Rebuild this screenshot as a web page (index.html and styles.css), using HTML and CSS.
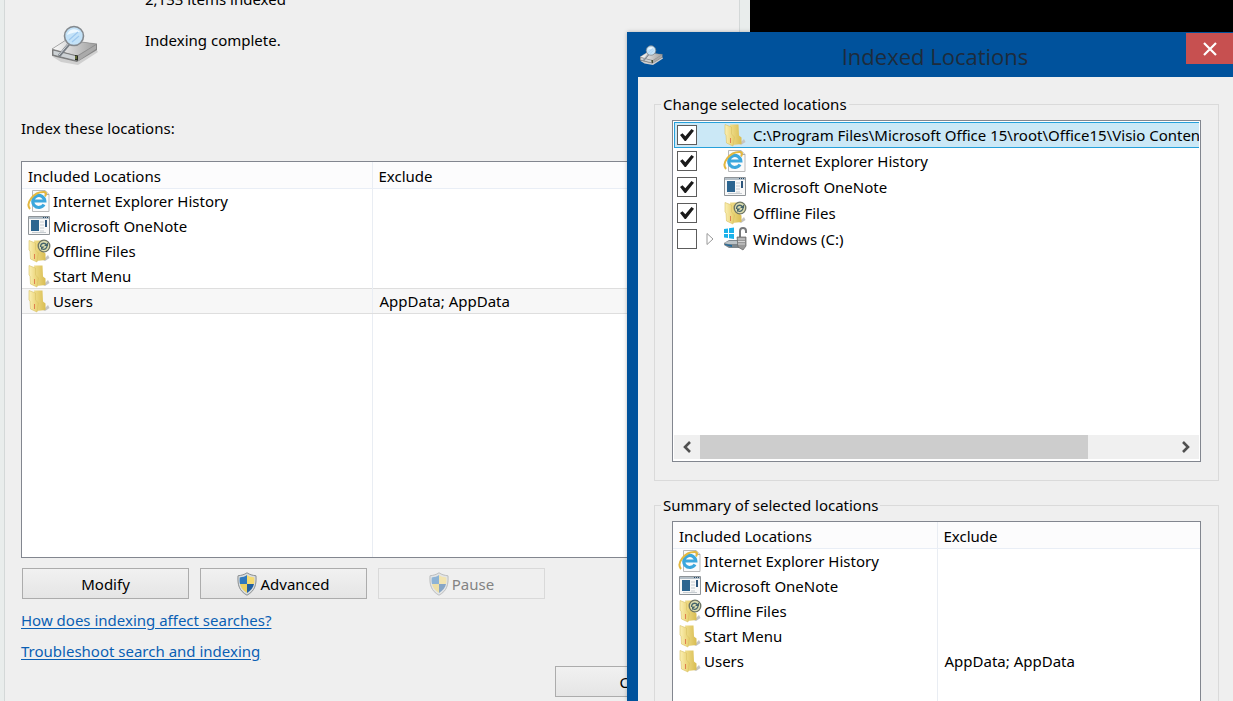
FILE: index.html
```html
<!DOCTYPE html>
<html lang="en">
<head>
<meta charset="utf-8">
<title>Indexing Options</title>
<link rel="stylesheet" href="styles.css">
</head>
<body>
<svg class="defs" aria-hidden="true">
  <defs>
    <linearGradient id="gold" x1="0" x2="1"><stop offset="0" stop-color="#f0de8c"/><stop offset="1" stop-color="#d9bd52"/></linearGradient>
    <linearGradient id="gold2" x1="0" x2="1"><stop offset="0" stop-color="#fbf0b4"/><stop offset="1" stop-color="#e6cc68"/></linearGradient>
    <linearGradient id="steel" x1="0" x2="1"><stop offset="0" stop-color="#fdfdfd"/><stop offset="1" stop-color="#9c9c9c"/></linearGradient>
    <symbol id="i-folder" viewBox="0 0 24 24">
      <path d="M16 21l5-5 1.500 3-4.500 3z" fill="#c4c4c4"/>
      <path d="M7 1.500h8.500l.5 11 2.500 2v6.500l-9 1z" fill="url(#gold)"/>
      <path d="M2 1.500l6.500 2.500v7l3 3-1.500 9-6.500-3-.5-8-1-1z" fill="url(#gold2)" stroke="#d8c163" stroke-width=".6"/>
      <path d="M7.500 15v5" stroke="#e08050" stroke-width="1"/>
    </symbol>
    <symbol id="i-ie" viewBox="0 0 24 24">
      <path d="M5.500 1.500H18l4 4V22.500H5.500z" fill="#fbfbfb" stroke="#b9b9b9"/>
      <path d="M18 1.500V5.500h4" fill="#ddd" stroke="#aaa"/>
      <path d="M17 15.500a6 6 0 1 1 .8-3.500H7.500" fill="none" stroke="#3ba7dd" stroke-width="3.200"/>
      <path d="M3 20C-2 14 7 2.500 17 3c3 .3 2 3 1 4.500" fill="none" stroke="#e3b840" stroke-width="2"/>
    </symbol>
    <symbol id="i-note" viewBox="0 0 24 24">
      <path d="M1.500 2.500h21v18h-21z" fill="#f8f8f8" stroke="#8f9498"/>
      <path d="M2 3h20v2H2z" fill="#b5c0c8"/>
      <path d="M16 3.500h1m1 0h1m1 0h1" stroke="#234a6a"/>
      <path d="M4 6h8v11H4z" fill="#2c6590"/>
      <path d="M13 8h4m-4 3h4m-4 3h4m-4 3h4M5 18.500h14" stroke="#c6ccd0"/>
      <path d="M18 6h2v7h-2z" fill="#2d567c"/>
    </symbol>
    <symbol id="i-offline" viewBox="0 0 24 24">
      <use href="#i-folder"/>
      <circle cx="17" cy="7" r="5.800" fill="#dcdcae" stroke="#6c7464" stroke-width="1.300"/>
      <path d="M13.500 8c0-4 4-5 6-2M20 6c.5 3-2 5-5 4" fill="none" stroke="#45646b" stroke-width="1.300"/>
      <path d="M17 7h4V3.500zM17.500 7.500H14V11z" fill="#45646b"/>
    </symbol>
    <symbol id="i-drive" viewBox="0 0 24 24">
      <path d="M1 2l4-.5v4.500H1zM6 1.300L11 .5V6H6zM1 7h4v4l-4-.5zM6 7h5v5l-5-.8z" fill="#1bb2ea"/>
      <path d="M1 16l5-3h14l-3 4v4H6l-5-3z" fill="#7e878d"/>
      <path d="M1 16l5-2h12l-3 3H5z" fill="#bcc3c7"/><path d="M2 17l7 1v2l-7-2z" fill="#216a9b"/>
      <path d="M17 10V4c0-4 6-4 6 0v2" fill="none" stroke="#77797b" stroke-width="2"/>
      <path d="M14 10h9v9l-3 4-5-3z" fill="#999" stroke="#666" stroke-width=".7"/>
      <path d="M15 12h7m-7 2.500h7m-7 2.500h7" stroke="#d4d4d4"/>
    </symbol>
    <symbol id="i-search" viewBox="0 0 48 40">
      <path d="M2 32l8 5 17 3 20-13-2-3z" fill="#cfcfcf"/>
      <path d="M1 24L15 15l31 4v6L26 37 1 31z" fill="#858585"/>
      <path d="M1 24L15 15l31 4-20 12z" fill="url(#steel)" stroke="#888" stroke-width=".6"/>
      <path d="M2 25l24 6v5L2 30z" fill="#cdd2d5" stroke="#666" stroke-width=".7"/>
      <path d="M27 31l18-11v4L27 36z" fill="#aaa"/>
      <path d="M24 30l3 .5v5l-3-.5z" fill="#252a20"/><path d="M25 31v3" stroke="#c2d260" stroke-width=".8"/>
      <path d="M18 19L8 31" stroke="#777d84" stroke-width="3"/><path d="M18 18L8 30" stroke="#d2d6da" stroke-width="1"/>
      <circle cx="23" cy="11" r="9.500" fill="#c3e2f8" stroke="#84898e" stroke-width="1.600"/>
      <path d="M16 10c2-7 10-7 13-3-4 0-9 1-13 3z" fill="#edf8ff"/>
      <path d="M18 15l9-8m-6 10l7-6" stroke="#9dc8ee" stroke-width="1.200"/>
    </symbol>
    <symbol id="i-shield" viewBox="0 0 20 24">
      <path d="M10 .8c3 2 5 2.400 9 3 .5 9-1 15-9 19.400C2 18.800.5 12.800 1 3.800c4-.6 6-1 9-3z" fill="#d9dddf" stroke="#8a8e90"/>
      <path d="M10 3v9H3c-.5-2-.5-4-.3-6.500C6 5 8 4.500 10 3z" fill="#2e78bd"/>
      <path d="M10 3c2 1.500 4 2 7.300 2.500.2 2.500.2 4.500-.3 6.500h-7z" fill="#f5db72"/>
      <path d="M3 12h7v9c-4-2.500-6-5-7-9z" fill="#ecd062"/>
      <path d="M10 12h7c-1 4-3 6.500-7 9z" fill="#215f9f"/>
    </symbol>
  </defs>
</svg>

<main class="desktop">
  <section class="window options" aria-label="Indexing Options">
    <div class="panel">
      <div class="status">
        <svg class="status-icon"><use href="#i-search"/></svg>
        <div class="status-text"><p>2,133 items indexed</p><p>Indexing complete.</p></div>
      </div>
      <p class="list-label">Index these locations:</p>
      <div class="list-box main-list">
        <table class="locations">
          <thead><tr><th class="name">Included Locations</th><th>Exclude</th></tr></thead>
          <tbody>
            <tr><td class="name"><span class="item"><svg class="icon"><use href="#i-ie"/></svg>Internet Explorer History</span></td><td></td></tr>
            <tr><td class="name"><span class="item"><svg class="icon"><use href="#i-note"/></svg>Microsoft OneNote</span></td><td></td></tr>
            <tr><td class="name"><span class="item"><svg class="icon"><use href="#i-offline"/></svg>Offline Files</span></td><td></td></tr>
            <tr><td class="name"><span class="item"><svg class="icon"><use href="#i-folder"/></svg>Start Menu</span></td><td></td></tr>
            <tr class="current"><td class="name"><span class="item"><svg class="icon"><use href="#i-folder"/></svg>Users</span></td><td>AppData; AppData</td></tr>
            <tr class="filler"><td class="name"></td><td></td></tr>
          </tbody>
        </table>
      </div>
      <div class="actions">
        <button type="button" class="btn">Modify</button>
        <button type="button" class="btn"><svg class="shield"><use href="#i-shield"/></svg>Advanced</button>
        <button type="button" class="btn" disabled><svg class="shield"><use href="#i-shield"/></svg>Pause</button>
      </div>
      <div class="links">
        <a href="#searches">How does indexing affect searches?</a>
        <a href="#troubleshoot">Troubleshoot search and indexing</a>
      </div>
      <div class="footer"><button type="button" class="btn">Close</button></div>
    </div>
  </section>

  <section class="window indexed" aria-label="Indexed Locations">
    <header class="titlebar">
      <svg class="title-icon"><use href="#i-search"/></svg>
      <h1>Indexed Locations</h1>
      <button type="button" class="close" aria-label="Close"><svg viewBox="0 0 16 16"><path d="M2 2l12 12M14 2L2 14" fill="none" stroke="#fff" stroke-width="2.200"/></svg></button>
    </header>
    <div class="content">
      <fieldset class="group">
        <legend>Change selected locations</legend>
        <div class="list-box tree">
          <ul>
            <li class="selected"><input type="checkbox" id="c1" checked><span class="expander"></span><svg class="icon"><use href="#i-folder"/></svg><label for="c1">C:\Program Files\Microsoft Office 15\root\Office15\Visio Content</label></li>
            <li><input type="checkbox" id="c2" checked><span class="expander"></span><svg class="icon"><use href="#i-ie"/></svg><label for="c2">Internet Explorer History</label></li>
            <li><input type="checkbox" id="c3" checked><span class="expander"></span><svg class="icon"><use href="#i-note"/></svg><label for="c3">Microsoft OneNote</label></li>
            <li><input type="checkbox" id="c4" checked><span class="expander"></span><svg class="icon"><use href="#i-offline"/></svg><label for="c4">Offline Files</label></li>
            <li><input type="checkbox" id="c5"><button type="button" class="expander" aria-label="Expand"><svg viewBox="0 0 8 14"><path d="M1 1.500L7 7l-6 5.500z" fill="#fff" stroke="#999"/></svg></button><svg class="icon"><use href="#i-drive"/></svg><label for="c5">Windows (C:)</label></li>
          </ul>
          <div class="scrollbar">
            <button type="button" aria-label="Scroll left"><svg viewBox="0 0 10 12"><path d="M8 1L3 6l5 5" fill="none" stroke="#505050" stroke-width="2.600"/></svg></button>
            <div class="track"><div class="thumb"></div></div>
            <button type="button" aria-label="Scroll right"><svg viewBox="0 0 10 12"><path d="M2 1l5 5-5 5" fill="none" stroke="#505050" stroke-width="2.600"/></svg></button>
          </div>
        </div>
      </fieldset>
      <fieldset class="group">
        <legend>Summary of selected locations</legend>
        <div class="list-box summary">
          <table class="locations">
            <thead><tr><th class="name">Included Locations</th><th>Exclude</th></tr></thead>
            <tbody>
              <tr><td class="name"><span class="item"><svg class="icon"><use href="#i-ie"/></svg>Internet Explorer History</span></td><td></td></tr>
              <tr><td class="name"><span class="item"><svg class="icon"><use href="#i-note"/></svg>Microsoft OneNote</span></td><td></td></tr>
              <tr><td class="name"><span class="item"><svg class="icon"><use href="#i-offline"/></svg>Offline Files</span></td><td></td></tr>
              <tr><td class="name"><span class="item"><svg class="icon"><use href="#i-folder"/></svg>Start Menu</span></td><td></td></tr>
              <tr><td class="name"><span class="item"><svg class="icon"><use href="#i-folder"/></svg>Users</span></td><td>AppData; AppData</td></tr>
              <tr class="filler"><td class="name"></td><td></td></tr>
            </tbody>
          </table>
        </div>
      </fieldset>
    </div>
  </section>
</main>
</body>
</html>
```
FILE: styles.css
```css
* { box-sizing: border-box; }
body { margin: 0; background: #000; color: #000; font: 15px/24px "Noto Sans", sans-serif; }
p, h1, ul { margin: 0; padding: 0; }
button, input { margin: 0; font: inherit; color: inherit; }
.defs { position: absolute; width: 0; height: 0; }
.desktop { position: relative; height: 100vh; overflow: hidden; }
.window { position: absolute; }

/* Indexing Options: the window behind */
.options { left: 0; right: 483px; top: -13px; bottom: 0; padding: 0 10px 0 4px; background: #e9edec; }
.panel { min-height: 100%; padding: 0 16px; background: #efefef; border: solid #d4d8d8; border-width: 0 1px; }
.status { display: flex; align-items: flex-start; gap: 46px; padding-left: 30px; }
.status-icon { width: 48px; height: 40px; margin-top: 38px; }
.status-text { display: grid; gap: 17px; }
.list-label { margin-top: 51px; margin-bottom: 21px; }
.list-box { background: #fff; border: 1px solid #82868f; }
.main-list { height: 397px; }

.locations { width: 100%; height: 100%; border-collapse: collapse; table-layout: fixed; }
.locations th { height: 26px; padding: 2px 6px 0; font-weight: 400; text-align: left; background: #fcfcfd; border-bottom: 1px solid #e9eef6; }
.locations td { height: 25px; padding: 0 7px; }
.locations .name { width: 350px; border-right: 1px solid #e9edf3; }
.locations td.name { padding: 0 5px; }
.locations .current td { background: #f7f7f7; border-top: 1px solid #dedede; border-bottom: 1px solid #dedede; }
.locations .filler td { height: auto; }
.item { display: flex; align-items: center; gap: 2px; }
.icon { flex: none; width: 24px; height: 24px; }

.actions { display: flex; gap: 11px; padding: 10px 1px 0; }
.btn { display: flex; align-items: center; justify-content: center; gap: 3px; width: 167px; height: 31px; padding: 0; background: linear-gradient(#f1f1f1, #e5e5e5); border: 1px solid #acacac; }
.btn:disabled { color: #838383; background: #efefef; border-color: #d9d9d9; }
.btn:disabled .shield { opacity: .5; }
.shield { width: 20px; height: 24px; }
.links { display: grid; justify-items: start; gap: 7px; margin-top: 9px; }
.links a { color: #0a5fb4; text-underline-offset: 2px; }
.footer { display: flex; justify-content: flex-end; margin-top: 3px; padding-right: 1px; }

/* Indexed Locations: the window in front */
.indexed { left: 627px; right: 0; top: 32px; bottom: 0; display: flex; flex-direction: column; background: #00529c; box-shadow: 0 0 4px #0004; overflow: hidden; }
.titlebar { flex: none; display: flex; align-items: flex-start; height: 45px; padding-left: 12px; }
.title-icon { width: 25px; height: 20px; margin-top: 13px; }
.titlebar h1 { flex: 1; padding: 8px 0 0 20px; font: 400 22px/32px "Open Sans", sans-serif; text-align: center; color: #1e2b3b; }
.close { display: grid; place-items: center; width: 47px; height: 31px; margin-top: 1px; padding: 0; background: #c75050; border: 0; }
.close svg { width: 16px; height: 16px; }
.content { flex: 1; margin-left: 11px; padding: 15px 14px 0 16px; background: #efefef; display: flex; flex-direction: column; gap: 12px; }
.group { min-width: 0; margin: 0; padding: 4px 17px 18px; border: 1px solid #dadada; }
.group legend { margin-left: -11px; padding: 0 2px; }
.tree { display: flex; flex-direction: column; height: 342px; padding: 1px; }
.tree ul { flex: 1; list-style: none; overflow: hidden; }
.tree li { display: flex; align-items: center; height: 26px; padding-left: 3px; white-space: nowrap; overflow: hidden; }
.tree li.selected { background: #cbe8f6; border: solid #26a0da; border-width: 1px 0 1px 1px; padding-left: 2px; }
.tree input { flex: none; appearance: none; width: 20px; height: 20px; background: #fff; border: 1px solid #5c5c5c; display: grid; place-items: center; }
.tree input:checked::before { content: ""; width: 14px; height: 12px; background: #1a1a1a; clip-path: polygon(0 50%, 18% 35%, 38% 60%, 82% 0, 100% 14%, 42% 100%, 34% 100%); }
.expander { flex: none; display: grid; place-items: center; width: 26px; height: 20px; padding: 0; background: none; border: 0; }
.expander svg { width: 8px; height: 14px; }
.tree label { margin-left: 6px; }
.scrollbar { display: flex; height: 25px; padding-bottom: 1px; }
.scrollbar button { display: grid; place-items: center; width: 26px; padding: 0; background: #f0f0f0; border: 0; }
.scrollbar button svg { width: 10px; height: 12px; }
.track { flex: 1; background: #f0f0f0; }
.thumb { width: 82%; height: 100%; background: #cdcdcd; }
.summary { height: 397px; }
.summary .name { width: 264px; }
```
